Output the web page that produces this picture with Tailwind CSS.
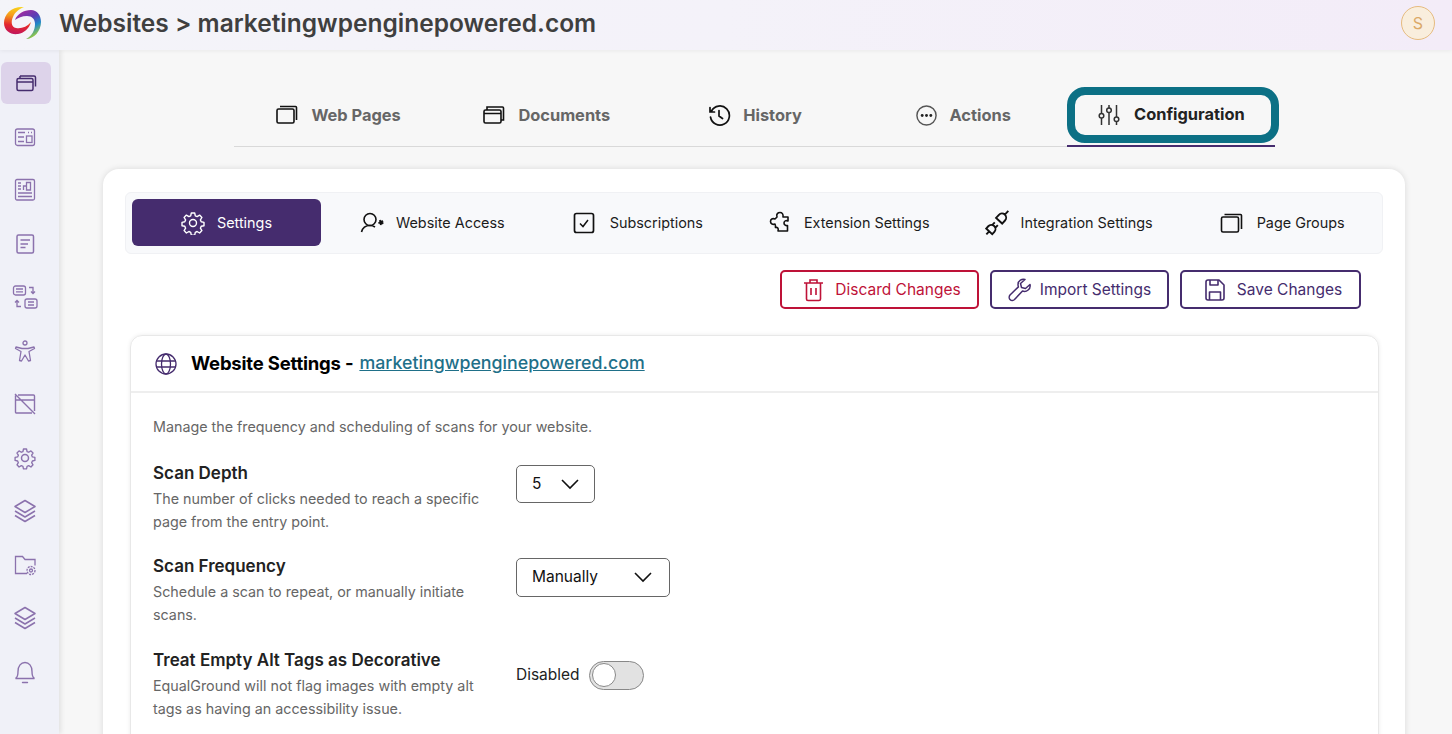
<!DOCTYPE html>
<html lang="en">
<head>
<meta charset="UTF-8">
<title>Website Settings</title>
<script src="https://cdn.jsdelivr.net/npm/@tailwindcss/browser@4"></script>
</head>
<body class="h-screen overflow-hidden bg-[#f7f7f7] font-['Inter',sans-serif] text-[#222]">

<!-- top bar -->
<header class="relative z-20 h-[50px] flex items-center justify-between pb-[4px] pl-[4px] pr-[17px] bg-gradient-to-r from-[#f4f4f9] via-[#f4f2f9] to-[#f3ecf8] shadow-[0_1px_4px_rgba(0,0,0,0.06)]">
  <div class="flex items-center">
    <svg width="38" height="34" viewBox="0 0 38 34">
      <defs>
        <linearGradient id="logoA" x1="0.7" y1="0" x2="0.6" y2="1">
          <stop offset="0" stop-color="#f9d71c"/>
          <stop offset="0.35" stop-color="#f59a1b"/>
          <stop offset="0.7" stop-color="#e3262e"/>
          <stop offset="1" stop-color="#c2185b"/>
        </linearGradient>
        <linearGradient id="logoB" x1="0.1" y1="0.1" x2="0.6" y2="1">
          <stop offset="0" stop-color="#a62a9e"/>
          <stop offset="0.4" stop-color="#5a3db5"/>
          <stop offset="0.68" stop-color="#1e88c9"/>
          <stop offset="1" stop-color="#9ccc3c"/>
        </linearGradient>
      </defs>
      <path fill="url(#logoA)" d="M20 1C8 0 0 8 0 17c0 8 7 12 14 11 6-1 11-5 13-12-4 5-10 7-15 6-5-1-5-7-3-11 2-5 6-8 11-10z"/>
      <path fill="url(#logoB)" d="M11 14c2-6 9-10 16-10 6 0 10 5 10 12 0 9-7 17-15 17 6-3 9-9 9-15 0-5-3-8-8-8-5 0-9 2-12 4z"/>
    </svg>
    <h1 class="ml-[17px] text-[24.5px] font-semibold text-[#3f3f3f] leading-none">Websites &gt; marketingwpenginepowered.com</h1>
  </div>
  <div class="w-[34px] h-[34px] rounded-full border border-[#e6bb7f] bg-[#f9eedd] flex items-center justify-center text-[16px] text-[#dba968]">S</div>
</header>

<div class="flex h-[684px]">
  <!-- side nav -->
  <nav class="relative z-10 w-[59px] shrink-0 pt-[12px] pl-[1px] flex flex-col gap-[11.5px] bg-[#f0f1f8] shadow-[2px_0_5px_rgba(0,0,0,0.09)] text-[#8b72ad]">
    <div class="w-[50px] h-[42px] rounded-md bg-[#ddd3ea] text-[#452c6e] flex items-center justify-center">
      <svg width="24" height="24" viewBox="0 0 24 24" fill="none" stroke="currentColor" stroke-width="1.5"><rect x="3" y="7.500" width="16" height="12" rx="1.500"/><path d="M3 11h16M6 5h14a1.500 1.500 0 0 1 1.500 1.500v9"/><path d="M6 7V5"/></svg>
    </div>
    <div class="h-[42px] w-[48px] flex items-center justify-center">
      <svg width="24" height="24" viewBox="0 0 24 24" fill="none" stroke="currentColor" stroke-width="1.300"><rect x="2.500" y="4" width="19" height="16.500" rx="2"/><path d="M5 7.500h7M15 7.500h1M18 7.500h1" stroke-width="1.600"/><path d="M5 12h6M5 16.500h6"/><rect x="13.500" y="11" width="5.500" height="6.500"/></svg>
    </div>
    <div class="h-[42px] w-[48px] flex items-center justify-center">
      <svg width="24" height="24" viewBox="0 0 24 24" fill="none" stroke="currentColor" stroke-width="1.300"><rect x="2.500" y="1.500" width="19" height="20.500" rx="1.500"/><path d="M5 5h3M5 8h3M5 11h3M5 15h14M5 18.500h14"/><path d="M10.500 12V8h3v4M13.500 12V4.500h4V12z"/></svg>
    </div>
    <div class="h-[42px] w-[48px] flex items-center justify-center">
      <svg width="24" height="24" viewBox="0 0 24 24" fill="none" stroke="currentColor" stroke-width="1.500"><rect x="4" y="3" width="16.500" height="18" rx="1.500"/><path d="M7.500 8h9.500M7.500 12h7.500M7.500 15.500h5"/></svg>
    </div>
    <div class="h-[42px] w-[48px] flex items-center justify-center">
      <svg width="26" height="26" viewBox="0 0 26 26" fill="none" stroke="currentColor" stroke-width="1.300"><rect x="1.500" y="2" width="12" height="9" rx="2"/><path d="M4 5h7M4 7.800h7"/><rect x="13" y="15" width="12" height="9" rx="2"/><path d="M16 18h6M16 21h6"/><path d="M17 3.500h4v6M19 7.500l2 2 2-2M9 22.500H5v-6M3 18.500l2-2 2 2"/></svg>
    </div>
    <div class="h-[42px] w-[48px] flex items-center justify-center">
      <svg width="24" height="24" viewBox="0 0 24 24" fill="none" stroke="currentColor" stroke-width="1.300" stroke-linejoin="round"><circle cx="12" cy="4" r="2"/><path d="M3 8l6 1.500h6L21 8l.5 1.500-5.500 3 1.500 9-2 .5L12 16l-3.500 6-2-.5 1.500-9-5.500-3z"/></svg>
    </div>
    <div class="h-[42px] w-[48px] flex items-center justify-center">
      <svg width="24" height="24" viewBox="0 0 24 24" fill="none" stroke="currentColor" stroke-width="1.400"><path d="M5 3h15.500a1 1 0 0 1 1 1v15M19 21H3.500a1 1 0 0 1-1-1V3.500M2.500 8h19M2 2l20 20"/></svg>
    </div>
    <div class="h-[42px] w-[48px] flex items-center justify-center">
      <svg width="24" height="24" viewBox="0 0 24 24" fill="none" stroke="currentColor" stroke-width="1.500" stroke-linejoin="round"><circle cx="12" cy="12" r="3.500"/><path d="M10.300 2h3.400l.6 2.800 1.800.8 2.500-1.500 2.300 2.400-1.500 2.400.8 1.900 2.800.6v3.300l-2.800.6-.8 1.900 1.500 2.400-2.300 2.400-2.500-1.500-1.800.8-.6 2.800h-3.400l-.6-2.800-1.800-.8-2.500 1.500-2.300-2.400 1.500-2.400-.8-1.900-2.800-.6v-3.300l2.800-.6.8-1.900-1.500-2.400 2.300-2.400 2.500 1.500 1.800-.8z" transform="translate(1.200 1.200) scale(.9)"/></svg>
    </div>
    <div class="h-[42px] w-[48px] flex items-center justify-center">
      <svg width="24" height="24" viewBox="0 0 24 24" fill="none" stroke="currentColor" stroke-width="1.500" stroke-linejoin="round"><path d="M12 1.500l10 6-10 6-10-6z"/><path d="M2 12l10 6 10-6M2 16.500l10 6 10-6"/></svg>
    </div>
    <div class="h-[42px] w-[48px] flex items-center justify-center">
      <svg width="24" height="24" viewBox="0 0 24 24" fill="none" stroke="currentColor" stroke-width="1.300"><path d="M14 20.500H2.500v-17h7l2.500 3h10v6"/><circle cx="18" cy="17.500" r="1.500"/><circle cx="18" cy="17.500" r="4" stroke-dasharray="2 1"/></svg>
    </div>
    <div class="h-[42px] w-[48px] flex items-center justify-center">
      <svg width="24" height="24" viewBox="0 0 24 24" fill="none" stroke="currentColor" stroke-width="1.500" stroke-linejoin="round"><path d="M12 1.500l10 6-10 6-10-6z"/><path d="M2 12l10 6 10-6M2 16.500l10 6 10-6"/></svg>
    </div>
    <div class="h-[42px] w-[48px] flex items-center justify-center">
      <svg width="24" height="24" viewBox="0 0 24 24" fill="none" stroke="currentColor" stroke-width="1.400" stroke-linecap="round"><path d="M2.500 18.500c2-1 2.500-3 2.500-7C5 6 8 2.500 12 2.500S19 6 19 11.500c0 4 .5 6 2.500 7z"/><path d="M9.500 22.500h5"/></svg>
    </div>
  </nav>

  <main class="flex-1 min-w-0 pl-[44px] pr-[47px]">
    <!-- main tabs -->
    <div class="ml-[131px] w-[1041px] h-[97px] pt-[37px]">
      <div class="grid grid-cols-5 h-[60px] border-b border-[#d9d9d9] text-[16.4px] font-bold text-[#666]">
        <div class="flex items-center justify-center gap-[12px] pb-[3px]">
          <svg width="24" height="24" viewBox="0 0 24 24" fill="none" stroke="#111" stroke-width="1.600"><rect x="2" y="6" width="17" height="14" rx="1.500"/><path d="M5 3.500h15.500a1 1 0 0 1 1 1V17"/></svg>
          <span>Web Pages</span>
        </div>
        <div class="flex items-center justify-center gap-[12px] pb-[3px]">
          <svg width="24" height="24" viewBox="0 0 24 24" fill="none" stroke="#111" stroke-width="1.600"><rect x="2" y="7" width="17" height="13" rx="1.500"/><path d="M2 10.500h17M5 7V4h15.500a1 1 0 0 1 1 1v12H19"/></svg>
          <span>Documents</span>
        </div>
        <div class="flex items-center justify-center gap-[12px] pb-[3px]">
          <svg width="24" height="24" viewBox="0 0 24 24" fill="none" stroke="#111" stroke-width="1.700" stroke-linecap="round"><path d="M4.500 8a9.500 9.500 0 1 1-1 6M3 4.500V9h4.500M12 7.500V13l3.500 2.500"/></svg>
          <span>History</span>
        </div>
        <div class="flex items-center justify-center gap-[12px] pb-[3px]">
          <svg width="23" height="23" viewBox="0 0 24 24" fill="none"><circle cx="12" cy="12" r="10" stroke="#555" stroke-width="1.500"/><circle cx="7.500" cy="12" r="1.500" fill="#222"/><circle cx="12" cy="12" r="1.500" fill="#222"/><circle cx="16.500" cy="12" r="1.500" fill="#222"/></svg>
          <span>Actions</span>
        </div>
        <div class="relative -mb-px flex items-center justify-center gap-[13px] pb-[3px] border-b-2 border-[#452c6e] text-[#222]">
          <svg width="24" height="24" viewBox="0 0 24 24" fill="none" stroke="#333" stroke-width="1.500"><path d="M4.500 2v8.500M4.500 15v7M12 2v3M12 9.500V22M19.500 2v12M19.500 18.500V22"/><circle cx="4.500" cy="12.800" r="2.300"/><circle cx="12" cy="7.300" r="2.300"/><circle cx="19.500" cy="16.300" r="2.300"/></svg>
          <span>Configuration</span>
          <div class="absolute left-0 top-0 w-[212px] h-[56px] rounded-[18px] border-[8px] border-[#0c7085]"></div>
        </div>
      </div>
    </div>

    <!-- card -->
    <section class="mt-[22px] h-[600px] rounded-t-2xl bg-white shadow-[0_0_6px_rgba(0,0,0,0.12)] px-[22px] pt-[23px]">
      <div class="h-[62px] flex items-center pb-[1px] pl-[6px] rounded-md border border-[#f0f1f4] bg-[#f8f9fb] text-[14.4px] text-[#1c1c1c]">
        <div class="w-[189px] h-[47px] flex items-center justify-center gap-[12px] rounded-md bg-[#452c6e] text-white">
          <svg width="24" height="24" viewBox="0 0 24 24" fill="none" stroke="#fff" stroke-width="1.400" stroke-linejoin="round"><circle cx="12" cy="12" r="3.500"/><path d="M10.300 2h3.400l.6 2.800 1.800.8 2.500-1.500 2.300 2.400-1.500 2.400.8 1.900 2.800.6v3.300l-2.800.6-.8 1.900 1.500 2.400-2.300 2.400-2.500-1.500-1.800.8-.6 2.800h-3.400l-.6-2.800-1.800-.8-2.500 1.500-2.300-2.400 1.500-2.400-.8-1.900-2.800-.6v-3.300l2.800-.6.8-1.900-1.500-2.400 2.300-2.400 2.500 1.500 1.800-.8z"/></svg>
          <span>Settings</span>
        </div>
        <div class="ml-[39px] flex items-center gap-[10px]">
          <svg width="26" height="24" viewBox="0 0 26 24" fill="none" stroke="#111" stroke-width="1.600"><circle cx="10" cy="8.500" r="6"/><path d="M1.500 21c1-4 4-6.500 8.500-6.500 2 0 3.500.5 5 1.500"/><circle cx="21" cy="11.500" r="2" fill="#111" stroke-width="1.400" stroke-dasharray="1.500 .8"/></svg>
          <span>Website Access</span>
        </div>
        <div class="ml-[68.500px] flex items-center gap-[14.500px]">
          <svg width="22" height="24" viewBox="0 0 22 24" fill="none" stroke="#111"><rect x="1.500" y="2.500" width="19" height="19" rx="2" stroke-width="1.700"/><path d="M7 12.500l3 3 5-6.500" stroke-width="1.500"/></svg>
          <span>Subscriptions</span>
        </div>
        <div class="ml-[66px] flex items-center gap-[13px]">
          <svg width="22" height="24" viewBox="0 0 22 24" fill="none" stroke="#111" stroke-width="1.600" stroke-linejoin="round"><path d="M8 6c-1-3 1-4.500 3-4.500s3.500 1.500 3 4.500h5v4c-2-1-4 0-4 2s2 3 3.500 2.500V20H9c1-3-1-4-2.500-3.500 0-1.500 0-2.500-.5-3.500-2 1-4.500 0-4.500-2.500S3.500 7 6 8z"/></svg>
          <span>Extension Settings</span>
        </div>
        <div class="ml-[55px] flex items-center gap-[12px]">
          <svg width="24" height="26" viewBox="-15 -15 30 30" fill="none" stroke="#111" stroke-width="1.800">
            <g transform="rotate(-47) scale(1.300)">
              <path d="M-15 0h4M-11-4h3a4 4 0 0 1 4 4 4 4 0 0 1-4 4h-3zM-4-2h3M-4 2h3M11 0h5M3-4h4a4 4 0 0 1 4 4 4 4 0 0 1-4 4H3z"/>
            </g>
          </svg>
          <span>Integration Settings</span>
        </div>
        <div class="ml-[67px] flex items-center gap-[13px]">
          <svg width="24" height="24" viewBox="0 0 24 24" fill="none" stroke="#111" stroke-width="1.600"><rect x="1.500" y="6" width="17" height="15" rx="1.500"/><path d="M4.500 3.500h16a1 1 0 0 1 1 1V18"/></svg>
          <span>Page Groups</span>
        </div>
      </div>

      <!-- actions -->
      <div class="mt-[16px] mr-[22px] flex justify-end gap-[11px] text-[15.5px]">
        <button class="w-[199px] h-[39px] flex items-center justify-center gap-[11px] pl-[5px] rounded-[5px] border-2 border-[#be1238] text-[#be1238]">
          <svg width="21" height="24" viewBox="0 0 21 24" fill="none" stroke="#be1238" stroke-width="1.600"><path d="M1 5h19M7 5V2h7v3"/><path d="M3.500 5v16a1.500 1.500 0 0 0 1.500 1.500h11a1.500 1.500 0 0 0 1.500-1.500V5M8 10v7M13 10v7"/></svg>
          <span>Discard Changes</span>
        </button>
        <button class="w-[179px] h-[39px] flex items-center justify-center gap-[8px] rounded-[5px] border-2 border-[#452c6e] text-[#452c6e]">
          <svg width="24" height="24" viewBox="0 0 24 24" fill="none" stroke="#452c6e" stroke-width="1.500" stroke-linejoin="round"><path d="M22 6.500l-4.500 4-4-1-1-4L17 1.500c-3-1-7 1-7 5 0 1 .2 1.800.4 2.400L2 17c-1.500 2-.5 4 0 4.500 1.500 1.500 3.500 1 4.500 0l8-8.500c4 1.500 8.500-2 7.500-6.500z"/></svg>
          <span>Import Settings</span>
        </button>
        <button class="w-[181px] h-[39px] flex items-center justify-center gap-[11px] pl-[5px] rounded-[5px] border-2 border-[#452c6e] text-[#452c6e]">
          <svg width="22" height="24" viewBox="0 0 22 24" fill="none" stroke="#452c6e" stroke-width="1.600" stroke-linejoin="round"><path d="M2 4a2 2 0 0 1 2-2h11l5 5v13a2 2 0 0 1-2 2H4a2 2 0 0 1-2-2z"/><path d="M6 2v5h8V2M5.500 22v-8h11v8"/></svg>
          <span>Save Changes</span>
        </button>
      </div>

      <!-- website settings -->
      <div class="mt-[26px] ml-[5px] mr-[4px] h-[500px] rounded-t-xl border border-[#e8e8e8] shadow-[0_0_4px_rgba(0,0,0,0.08)]">
        <div class="h-[57px] flex items-center pl-[24px] border-b-2 border-[#eeeeee]">
          <svg width="22" height="22" viewBox="0 0 22 22" fill="none" stroke="#452c6e" stroke-width="1.300"><circle cx="11" cy="11" r="10"/><ellipse cx="11" cy="11" rx="4.500" ry="10"/><path d="M1 8h20M1 14h20"/></svg>
          <h2 class="ml-[14px] text-[18.500px] font-bold text-black tracking-[-0.2px]">Website Settings -</h2>
          <a href="#" class="ml-[6px] text-[17.800px] font-medium text-[#1f7089] underline">marketingwpenginepowered.com</a>
        </div>
        <div class="px-[22px] pt-[22px]">
          <p class="text-[14.300px] leading-[23px] text-[#666]">Manage the frequency and scheduling of scans for your website.</p>

          <div class="mt-[22.500px] flex items-start">
            <div class="w-[363px]">
              <h3 class="mb-[2.500px] text-[17px] leading-[24px] font-semibold text-[#222]">Scan Depth</h3>
              <p class="w-[345px] text-[14.300px] leading-[23px] text-[#666]">The number of clicks needed to reach a specific page from the entry point.</p>
            </div>
            <div class="mt-[4px] w-[79px] h-[38px] flex items-center justify-between pl-[15px] pr-[14px] rounded-[5px] border border-[#666] text-[15.500px] text-[#111]">
              <span>5</span>
              <svg width="20" height="12" viewBox="0 0 20 12" fill="none" stroke="#111" stroke-width="1.600"><path d="M2 2l8 8 8-8"/></svg>
            </div>
          </div>

          <div class="mt-[20.500px] flex items-start">
            <div class="w-[363px]">
              <h3 class="mb-[2.500px] text-[17px] leading-[24px] font-semibold text-[#222]">Scan Frequency</h3>
              <p class="w-[345px] text-[14.300px] leading-[23px] text-[#666]">Schedule a scan to repeat, or manually initiate scans.</p>
            </div>
            <div class="mt-[4px] w-[154px] h-[39px] flex items-center justify-between pl-[15px] pr-[16px] rounded-[5px] border border-[#666] text-[15.500px] text-[#111]">
              <span>Manually</span>
              <svg width="20" height="12" viewBox="0 0 20 12" fill="none" stroke="#111" stroke-width="1.600"><path d="M2 2l8 8 8-8"/></svg>
            </div>
          </div>

          <div class="mt-[21.500px] flex items-start">
            <div class="w-[363px]">
              <h3 class="mb-[2.500px] text-[17px] leading-[24px] font-semibold text-[#222]">Treat Empty Alt Tags as Decorative</h3>
              <p class="w-[345px] text-[14.300px] leading-[23px] text-[#666]">EqualGround will not flag images with empty alt tags as having an accessibility issue.</p>
            </div>
            <div class="mt-[13px] flex items-center gap-[9px] text-[15.500px] text-[#222]">
              <span>Disabled</span>
              <div class="w-[55px] h-[29px] rounded-full border border-[#888] bg-[#e2e2e2] flex items-center pl-[2px]">
                <div class="w-[24px] h-[24px] rounded-full bg-white border border-[#888]"></div>
              </div>
            </div>
          </div>
        </div>
      </div>
    </section>
  </main>
</div>
</body>
</html>
